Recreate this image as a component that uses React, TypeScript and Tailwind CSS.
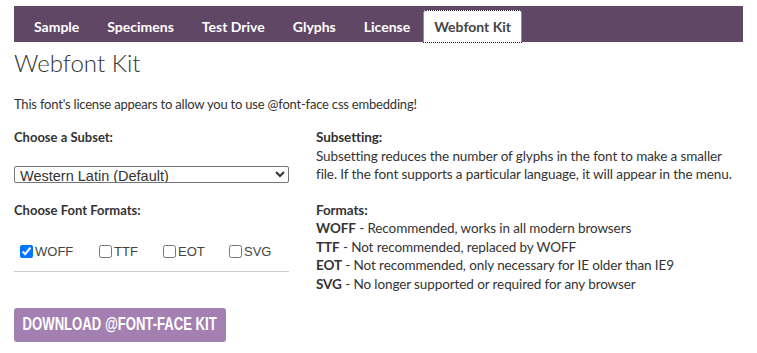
import React from "react";

const tabs = ["Sample", "Specimens", "Test Drive", "Glyphs", "License"];

export default function App() {
  const base = { fontFamily: "Lato, 'Open Sans', sans-serif" };
  return (
    <div className="w-[757px] h-[353px] bg-white text-[#333] overflow-hidden" style={base}>
      <div className="mx-[14px] mt-[6px] h-[36px] bg-[#614766] flex items-end pl-[6px]">
        {tabs.map((t) => (
          <div key={t} className="h-[32px] px-[14px] flex items-center text-[14px] font-bold text-white">
            {t}
          </div>
        ))}
        <div className="h-[33px] mb-[-1px] ml-[-1px] px-[10px] flex items-center text-[14px] font-bold text-[#444] bg-white border border-dotted border-[#222] rounded-t-[3px]">
          Webfont Kit
        </div>
      </div>
      <div className="px-[14px]">
        <h1 className="text-[24px] font-light leading-[30px] mt-[6px] text-[#333]">Webfont Kit</h1>
        <p className="text-[13px] tracking-[-0.2px] leading-[18px] mt-[17px]">
          This font's license appears to allow you to use @font-face css embedding!
        </p>
        <div className="flex mt-[15px]">
          <div className="w-[275px] shrink-0">
            <div className="text-[13px] leading-[18px] font-bold">Choose a Subset:</div>
            <select
              className="mt-[20px] block w-[275px] h-[17px] border border-[#767676] rounded-[2px] text-[14.5px] leading-[15px] text-[#333] py-0 px-[1px] appearance-auto"
              style={{ fontFamily: "Arial, 'Liberation Sans', sans-serif" }}
              defaultValue="w"
            >
              <option value="w">Western Latin (Default)</option>
            </select>
            <div className="text-[13px] leading-[18px] font-bold mt-[18px]">Choose Font Formats:</div>
            <div className="mt-[23px] flex items-center pl-[6px] pb-[9px] border-b border-[#ccc] text-[13px]"
              style={{ fontFamily: "Arial, 'Liberation Sans', sans-serif" }}>
              <label className="flex items-center w-[79px] text-[#444]">
                <input type="checkbox" defaultChecked className="w-[13px] h-[13px] m-0 accent-[#0075ff]" />
                <span className="ml-[2px]">WOFF</span>
              </label>
              <label className="flex items-center w-[64px] text-[#444]">
                <input type="checkbox" className="w-[13px] h-[13px] m-0" />
                <span className="ml-[2px]">TTF</span>
              </label>
              <label className="flex items-center w-[66px] text-[#444]">
                <input type="checkbox" className="w-[13px] h-[13px] m-0" />
                <span className="ml-[2px]">EOT</span>
              </label>
              <label className="flex items-center text-[#444]">
                <input type="checkbox" className="w-[13px] h-[13px] m-0" />
                <span className="ml-[2px]">SVG</span>
              </label>
            </div>
            <button className="mt-[36px] w-[212px] h-[34px] rounded-[3px] bg-[#a47fb1] text-white flex items-center justify-center overflow-hidden">
              <span
                className="inline-block whitespace-nowrap text-[19px] font-bold scale-x-[0.69]"
                style={{ fontFamily: "'Liberation Sans', Arial, sans-serif" }}
              >
                DOWNLOAD @FONT-FACE KIT
              </span>
            </button>
          </div>
          <div className="ml-[27px] text-[13.5px] tracking-[-0.1px] leading-[18.5px] whitespace-nowrap">
            <div className="font-bold">Subsetting:</div>
            <div>Subsetting reduces the number of glyphs in the font to make a smaller</div>
            <div>file. If the font supports a particular language, it will appear in the menu.</div>
            <div className="font-bold mt-[17px]">Formats:</div>
            <div><b>WOFF</b> - Recommended, works in all modern browsers</div>
            <div><b>TTF</b> - Not recommended, replaced by WOFF</div>
            <div><b>EOT</b> - Not recommended, only necessary for IE older than IE9</div>
            <div><b>SVG</b> - No longer supported or required for any browser</div>
          </div>
        </div>
      </div>
    </div>
  );
}
